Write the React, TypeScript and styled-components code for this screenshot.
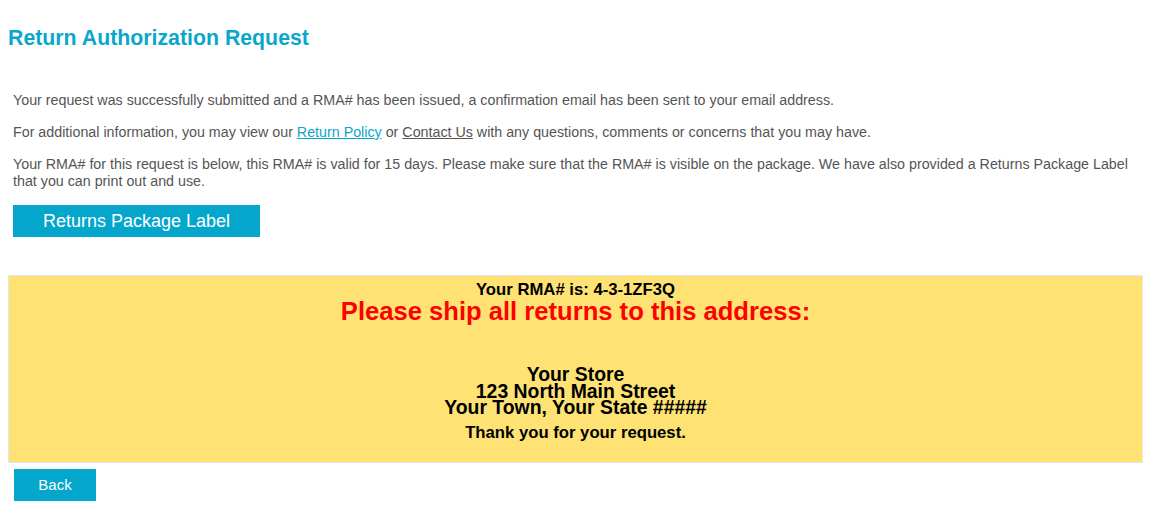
import React from "react";
import styled, { createGlobalStyle } from "styled-components";

const GlobalStyle = createGlobalStyle`
  html, body {
    margin: 0;
    padding: 0;
    background: #ffffff;
  }
  body {
    font-family: "Liberation Sans", Arial, sans-serif;
  }
`;

const Page = styled.div`
  padding: 0 8px;
  width: 1145px;
  box-sizing: content-box;
`;

const Title = styled.h2`
  margin: 26px 0 0;
  font-size: 21.3px;
  line-height: 24px;
  font-weight: bold;
  color: #0aa6cc;
`;

const Intro = styled.div`
  padding: 0 5px;
  margin-top: 42px;
`;

const Para = styled.p`
  margin: 0 0 15px;
  font-size: 14.28px;
  line-height: 17px;
  color: #555555;
`;

const Link = styled.a<{ $tone: "brand" | "plain" }>`
  color: ${(p) => (p.$tone === "brand" ? "#0aa6cc" : "#555555")};
  text-decoration: underline;
  cursor: pointer;
`;

const Button = styled.button<{ $w: number; $size: number }>`
  display: flex;
  align-items: center;
  justify-content: center;
  width: ${(p) => p.$w}px;
  height: 32px;
  padding: 0;
  border: none;
  background: #05a6cc;
  color: #ffffff;
  font-family: "Liberation Sans", Arial, sans-serif;
  font-size: ${(p) => p.$size}px;
  cursor: pointer;
`;

const LabelRow = styled.div`
  padding: 0 5px;
`;

const Notice = styled.div`
  margin-top: 38px;
  width: 1133px;
  border: 1px solid #e6e6e6;
  background: #fee374;
  padding: 5px 0 20px;
  display: flex;
  flex-direction: column;
  align-items: center;
  text-align: center;
  color: #000000;
  font-weight: bold;
`;

const RmaLine = styled.div`
  font-size: 16.7px;
  line-height: 17px;
`;

const ShipLine = styled.div`
  font-size: 25.6px;
  line-height: 26px;
  color: #ff0000;
`;

const Address = styled.div`
  margin-top: 42px;
  font-size: 19.4px;
  line-height: 16.5px;
`;

const Thanks = styled.div`
  margin-top: 7px;
  font-size: 16.7px;
  line-height: 19px;
`;

const BackRow = styled.div`
  padding: 6px 6px 0;
`;

export default function App() {
  return (
    <>
      <GlobalStyle />
      <Page>
        <Title>Return Authorization Request</Title>
        <Intro>
          <Para>
            Your request was successfully submitted and a RMA# has been issued, a confirmation email has been sent to your email address.
          </Para>
          <Para>
            For additional information, you may view our <Link $tone="brand">Return Policy</Link> or{" "}
            <Link $tone="plain">Contact Us</Link> with any questions, comments or concerns that you may have.
          </Para>
          <Para>
            Your RMA# for this request is below, this RMA# is valid for 15 days. Please make sure that the RMA# is visible on the package. We have also provided a Returns Package Label that you can print out and use.
          </Para>
        </Intro>
        <LabelRow>
          <Button $w={247} $size={18}>Returns Package Label</Button>
        </LabelRow>
        <Notice>
          <RmaLine>Your RMA# is: 4-3-1ZF3Q</RmaLine>
          <ShipLine>Please ship all returns to this address:</ShipLine>
          <Address>
            <div>Your Store</div>
            <div>123 North Main Street</div>
            <div>Your Town, Your State #####</div>
          </Address>
          <Thanks>Thank you for your request.</Thanks>
        </Notice>
        <BackRow>
          <Button $w={82} $size={15}>Back</Button>
        </BackRow>
      </Page>
    </>
  );
}
